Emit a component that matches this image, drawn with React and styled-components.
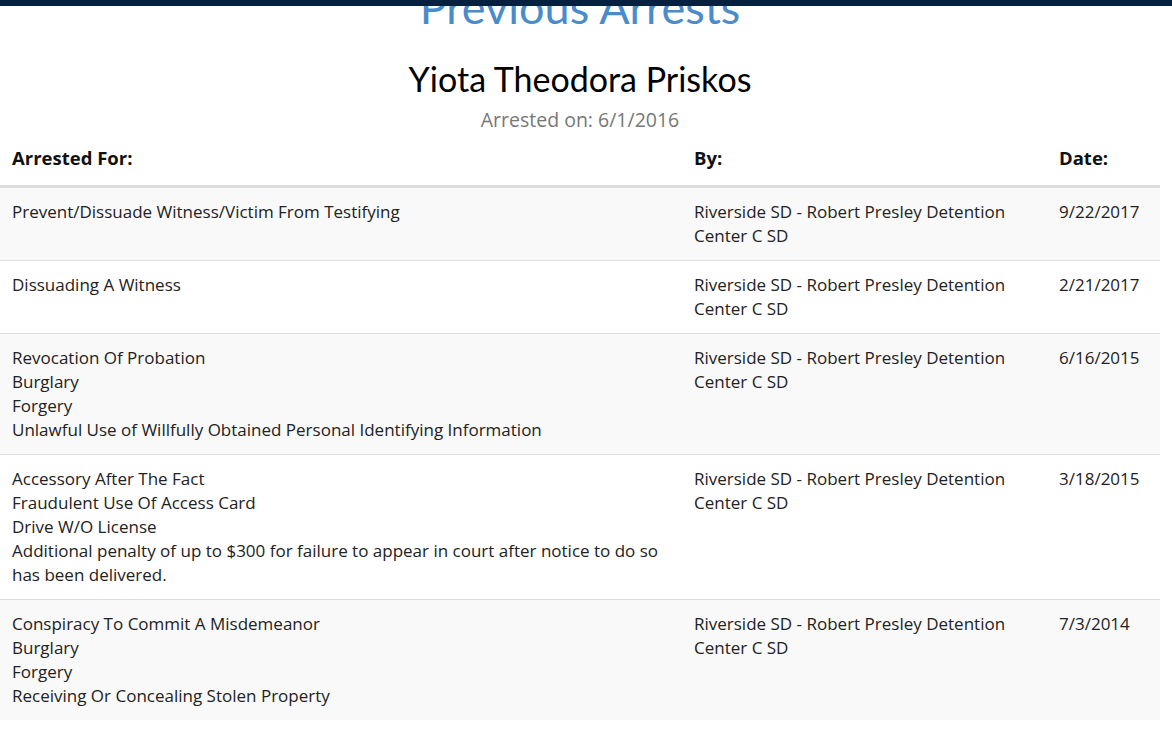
import styled, { createGlobalStyle } from "styled-components";

const GlobalStyle = createGlobalStyle`
  html, body {
    margin: 0;
    padding: 0;
    background: #fff;
    overflow: hidden;
  }
  body {
    font-family: "Open Sans", "Liberation Sans", sans-serif;
    color: #333;
  }
`;

const arrests = [
  {
    charges: ["Prevent/Dissuade Witness/Victim From Testifying"],
    by: "Riverside SD - Robert Presley Detention Center C SD",
    date: "9/22/2017",
  },
  {
    charges: ["Dissuading A Witness"],
    by: "Riverside SD - Robert Presley Detention Center C SD",
    date: "2/21/2017",
  },
  {
    charges: [
      "Revocation Of Probation",
      "Burglary",
      "Forgery",
      "Unlawful Use of Willfully Obtained Personal Identifying Information",
    ],
    by: "Riverside SD - Robert Presley Detention Center C SD",
    date: "6/16/2015",
  },
  {
    charges: [
      "Accessory After The Fact",
      "Fraudulent Use Of Access Card",
      "Drive W/O License",
      "Additional penalty of up to $300 for failure to appear in court after notice to do so has been delivered.",
    ],
    by: "Riverside SD - Robert Presley Detention Center C SD",
    date: "3/18/2015",
  },
  {
    charges: [
      "Conspiracy To Commit A Misdemeanor",
      "Burglary",
      "Forgery",
      "Receiving Or Concealing Stolen Property",
    ],
    by: "Riverside SD - Robert Presley Detention Center C SD",
    date: "7/3/2014",
  },
];

const App = () => {
  return (
    <>
      <GlobalStyle />
      <TopBar />
      <Page>
        <SectionTitle>Previous Arrests</SectionTitle>
        <Name>Yiota Theodora Priskos</Name>
        <Subtitle>Arrested on: 6/1/2016</Subtitle>
        <Table>
          <colgroup>
            <col style={{ width: "682px" }} />
            <col style={{ width: "365px" }} />
            <col />
          </colgroup>
          <thead>
            <tr>
              <HeadCell>Arrested For:</HeadCell>
              <HeadCell>By:</HeadCell>
              <HeadCell>Date:</HeadCell>
            </tr>
          </thead>
          <tbody>
            {arrests.map((a, i) => (
              <Row key={i} $striped={i % 2 === 0}>
                <Cell>
                  {a.charges.map((c) => (
                    <div key={c}>{c}</div>
                  ))}
                </Cell>
                <Cell>{a.by}</Cell>
                <Cell>{a.date}</Cell>
              </Row>
            ))}
          </tbody>
        </Table>
      </Page>
    </>
  );
};

const TopBar = styled.div`
  position: fixed;
  top: 0;
  left: 0;
  right: 0;
  height: 6px;
  background: #05213f;
  z-index: 2;
`;

const Page = styled.div`
  width: 1160px;
  display: flex;
  flex-direction: column;
  align-items: center;
`;

const SectionTitle = styled.h2`
  margin: -21px 0 0;
  font-family: Lato, "Open Sans", sans-serif;
  font-weight: 400;
  font-size: 45px;
  line-height: 56px;
  color: #4a8bc9;
`;

const Name = styled.h1`
  margin: 24px 0 0;
  font-family: Lato, "Open Sans", sans-serif;
  font-weight: 400;
  font-size: 34px;
  line-height: 40px;
  color: #000;
`;

const Subtitle = styled.div`
  margin-top: 8px;
  font-size: 19.5px;
  line-height: 26px;
  color: #777;
`;

const Table = styled.table`
  width: 100%;
  margin-top: 1px;
  table-layout: fixed;
  border-collapse: collapse;
  border-spacing: 0;
`;

const HeadCell = styled.th`
  padding: 12px 12px 15px;
  text-align: left;
  font-size: 18.5px;
  font-weight: 700;
  line-height: 24px;
  color: #111;
  border-bottom: 3px solid #ddd;
`;

const Row = styled.tr`
  background: ${(p) => (p.$striped ? "#f9f9f9" : "#fff")};
  border-top: 1px solid #ddd;

  &:first-child {
    border-top: none;
  }
`;

const Cell = styled.td`
  padding: 12px;
  vertical-align: top;
  font-size: 17px;
  line-height: 24px;
  color: #222;
`;

export default App;
